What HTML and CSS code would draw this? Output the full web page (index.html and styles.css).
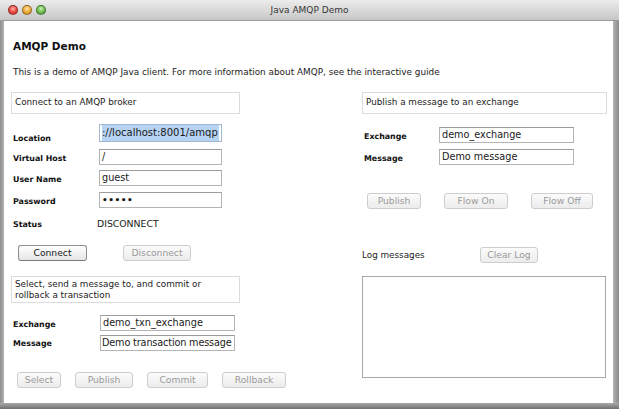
FILE: index.html
```html
<!DOCTYPE html>
<html>
<head>
<meta charset="utf-8">
<title>Java AMQP Demo</title>
<link rel="stylesheet" href="styles.css">
</head>
<body>
<div class="window">
  <div class="titlebar">
    <div class="lights">
      <span class="light red"></span>
      <span class="light yellow"></span>
      <span class="light green"></span>
    </div>
    <div class="wtitle">Java AMQP Demo</div>
  </div>
  <div class="content">
    <h1 class="heading">AMQP Demo</h1>
    <p class="intro">This is a demo of AMQP Java client. For more information about AMQP, see the interactive guide</p>
    <div class="columns">
      <div class="col col-left">
        <div class="box">Connect to an AMQP broker</div>
        <div class="form form-conn">
          <div class="label label-loc">Location</div>
          <div class="field field-loc"><span class="sel">://localhost:8001/amqp</span></div>
          <div class="label">Virtual Host</div>
          <div class="field">/</div>
          <div class="label">User Name</div>
          <div class="field">guest</div>
          <div class="label">Password</div>
          <div class="field pw">&#8226;&#8226;&#8226;&#8226;&#8226;</div>
          <div class="label">Status</div>
          <div class="status">DISCONNECT</div>
        </div>
        <div class="buttons buttons-conn">
          <button class="btn btn-on w-connect">Connect</button>
          <button class="btn w-disconnect">Disconnect</button>
        </div>
        <div class="box box-two">Select, send a message to, and commit or rollback a transaction</div>
        <div class="form form-txn">
          <div class="label">Exchange</div>
          <div class="field">demo_txn_exchange</div>
          <div class="label">Message</div>
          <div class="field field-tight">Demo transaction message</div>
        </div>
        <div class="buttons buttons-txn">
          <button class="btn w-select">Select</button>
          <button class="btn w-publish2">Publish</button>
          <button class="btn w-commit">Commit</button>
          <button class="btn w-rollback">Rollback</button>
        </div>
      </div>
      <div class="col col-right">
        <div class="box">Publish a message to an exchange</div>
        <div class="form form-pub">
          <div class="label">Exchange</div>
          <div class="field">demo_exchange</div>
          <div class="label">Message</div>
          <div class="field">Demo message</div>
        </div>
        <div class="buttons buttons-pub">
          <button class="btn w-publish">Publish</button>
          <button class="btn w-flowon">Flow On</button>
          <button class="btn w-flowoff">Flow Off</button>
        </div>
        <div class="logrow">
          <span class="loglabel">Log messages</span>
          <button class="btn w-clear">Clear Log</button>
        </div>
        <div class="logarea"></div>
      </div>
    </div>
  </div>
</div>
</body>
</html>
```
FILE: styles.css
```css
html, body {
  margin: 0;
  padding: 0;
  background: #7a7a7a;
}
body {
  font-family: "DejaVu Sans", Verdana, sans-serif;
  color: #1c1c1c;
}
.window {
  width: 619px;
  height: 409px;
  box-sizing: border-box;
  display: flex;
  flex-direction: column;
  padding: 0 6px 6px 4px;
  background: linear-gradient(to right, #8c8c8c 0, #b4b4b4 4px, #b4b4b4 613px, #8a8a8a 619px);
  position: relative;
}
.window::after {
  content: "";
  position: absolute;
  left: 0;
  right: 0;
  bottom: 0;
  height: 6px;
  background: linear-gradient(to bottom, #a9a9a9, #6f6f6f);
}
.titlebar {
  height: 20px;
  margin: 0 -6px 0 -4px;
  padding: 0 6px 0 4px;
  background: linear-gradient(to bottom, #ececec 0, #dadada 50%, #c6c6c6 100%);
  border-bottom: 1px solid #9a9a9a;
  display: flex;
  align-items: center;
  position: relative;
}
.lights {
  display: flex;
  gap: 4px;
  margin-left: 4px;
}
.light {
  width: 10px;
  height: 10px;
  border-radius: 50%;
  box-sizing: border-box;
  border: 1px solid rgba(0,0,0,0.35);
}
.red { background: radial-gradient(circle at 50% 35%, #ffb3ad 0, #e8463c 55%, #b52a22 100%); }
.yellow { background: radial-gradient(circle at 50% 35%, #ffe5a6 0, #e9a836 55%, #b8791c 100%); }
.green { background: radial-gradient(circle at 50% 35%, #c9f2b4 0, #6dbb4f 55%, #3f8a2c 100%); }
.wtitle {
  position: absolute;
  left: 0;
  right: 0;
  text-align: center;
  font-size: 9px;
  color: #363636;
  pointer-events: none;
}
.content {
  flex: 1;
  background: #fff;
  padding: 0 0 0 7px;
  overflow: hidden;
}
.heading {
  margin: 18px 0 0 2px;
  font-size: 10.5px;
  line-height: 14px;
  font-weight: bold;
  color: #111;
}
.intro {
  margin: 13px 0 0 2px;
  font-size: 8.9px;
  line-height: 12px;
  color: #222;
}
.columns {
  display: flex;
  gap: 122px;
  margin-top: 14px;
}
.col { display: flex; flex-direction: column; }
.col-left { width: 229px; flex-shrink: 0; }
.col-right { width: 245px; flex-shrink: 0; }
.box {
  border: 1px solid #dcdcdc;
  height: 22px;
  box-sizing: border-box;
  font-size: 8.8px;
  line-height: 11px;
  padding: 4px 3px;
  color: #222;
}
.box-two {
  height: 27px;
  padding: 2px 3px;
  margin-top: 15px;
}
.form {
  display: grid;
  align-items: center;
}
.form-conn {
  grid-template-columns: 88px 123px;
  grid-template-rows: 26px 20px 22px 22px 24px;
  margin-top: 7px;
}
.form-txn {
  grid-template-columns: 89px 135px;
  grid-template-rows: 20px 19px;
  margin-top: 10px;
}
.form-pub {
  grid-template-columns: 77px 135px;
  grid-template-rows: 22px 22px;
  margin-top: 10px;
}
.label {
  font-size: 7.9px;
  font-weight: bold;
  padding-left: 2px;
  color: #111;
  position: relative;
  top: 1px;
}
.label-loc { top: 4px; }
.field {
  height: 16px;
  box-sizing: border-box;
  border: 1px solid #b4b4b4;
  border-top-color: #9c9c9c;
  background: #fff;
  font-size: 9.7px;
  line-height: 14px;
  padding: 0 2px;
  white-space: nowrap;
  overflow: hidden;
  color: #1a1a1a;
}
.field-tight {
  letter-spacing: -0.15px;
  padding-left: 1px;
}
.field-loc {
  height: 18px;
  line-height: 16px;
  font-size: 10px;
  border-color: #9fb7d3;
  position: relative;
  top: -1px;
}
.sel {
  background: #b6d3f3;
  display: block;
}
.pw {
  font-size: 9px;
  letter-spacing: 0.5px;
  font-weight: bold;
}
.status {
  font-size: 9.3px;
  margin-left: -2px;
  color: #1a1a1a;
}
.buttons {
  display: flex;
}
.buttons-conn { margin-top: 10px; padding-left: 7px; gap: 36px; }
.buttons-txn { margin-top: 20px; padding-left: 6px; gap: 14px; }
.buttons-pub { margin-top: 25px; padding-left: 5px; gap: 23px; }
.btn {
  flex-shrink: 0;
  height: 16px;
  box-sizing: border-box;
  border: 1px solid #cdcdcd;
  border-radius: 3px;
  background: linear-gradient(to bottom, #fbfbfb, #ececec);
  font-family: "DejaVu Sans", Verdana, sans-serif;
  font-size: 9.2px;
  line-height: 14px;
  padding: 0;
  color: #9a9a9a;
  text-align: center;
}
.btn-on {
  border-color: #8e8e8e;
  border-bottom-color: #7a7a7a;
  background: linear-gradient(to bottom, #ffffff, #e6e6e6);
  color: #1a1a1a;
}
.w-connect { width: 69px; }
.w-disconnect { width: 68px; }
.w-select { width: 44px; }
.w-publish2 { width: 58px; }
.w-commit { width: 61px; }
.w-rollback { width: 64px; }
.w-publish { width: 54px; }
.w-flowon { width: 64px; }
.w-flowoff { width: 62px; }
.w-clear { width: 58px; }
.logrow {
  display: flex;
  align-items: center;
  margin-top: 38px;
}
.loglabel {
  width: 118px;
  font-size: 8.8px;
  color: #222;
}
.logarea {
  margin-top: 13px;
  width: 244px;
  height: 102px;
  box-sizing: border-box;
  border: 1px solid #a8a8a8;
  background: #fff;
}
```
